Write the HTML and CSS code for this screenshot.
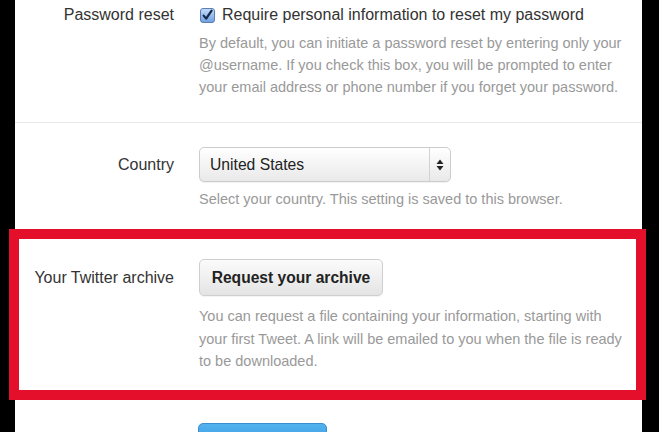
FILE: index.html
```html
<!DOCTYPE html>
<html lang="en">
<head>
<meta charset="utf-8">
<title>Settings</title>
<link rel="stylesheet" href="styles.css">
</head>
<body>
<div class="panel">
  <div class="row row-first">
    <div class="label">Password reset</div>
    <div class="control">
      <label class="check">
        <svg class="cb" width="15" height="15" viewBox="0 0 15 15">
          <defs>
            <linearGradient id="cbg" x1="0" y1="0" x2="0" y2="1">
              <stop offset="0" stop-color="#c6dcf7"/>
              <stop offset="1" stop-color="#6f9fe0"/>
            </linearGradient>
          </defs>
          <rect x="0.5" y="0.5" width="14" height="14" rx="2.5" fill="url(#cbg)" stroke="#5a7fb4"/>
          <path d="M3.6 7.6 L6.2 10.6 L11.6 2.6" fill="none" stroke="#15294d" stroke-width="2.2" stroke-linecap="round" stroke-linejoin="round"/>
        </svg>
        <span>Require personal information to reset my password</span>
      </label>
      <p class="help help-first">By default, you can initiate a password reset by entering only your @username. If you check this box, you will be prompted to enter your email address or phone number if you forget your password.</p>
    </div>
  </div>
  <div class="row row-country">
    <div class="label label-select">Country</div>
    <div class="control">
      <div class="select">
        <span class="select-value">United States</span>
        <span class="select-arrows">
          <svg width="8" height="12" viewBox="0 0 8 12"><path d="M4 0.5 L7.5 5 L0.5 5 Z M4 11.5 L7.5 7 L0.5 7 Z" fill="#222"/></svg>
        </span>
      </div>
      <p class="help">Select your country. This setting is saved to this browser.</p>
    </div>
  </div>
  <div class="row row-archive">
    <div class="frame"></div>
    <div class="label label-button">Your Twitter archive</div>
    <div class="control">
      <button class="btn" type="button">Request your archive</button>
      <p class="help help-archive">You can request a file containing your information, starting with your first Tweet. A link will be emailed to you when the file is ready to be downloaded.</p>
    </div>
  </div>
  <div class="row row-save">
    <div></div>
    <div class="control">
      <button class="btn-primary" type="button" aria-label="Save changes"></button>
    </div>
  </div>
</div>
</body>
</html>
```
FILE: styles.css
```css
html, body {
  margin: 0;
  padding: 0;
  background: #000;
  height: 432px;
  overflow: hidden;
}
.panel {
  margin-left: 15px;
  width: 627px;
  height: 432px;
  background: #fff;
  font-family: "Liberation Sans", Arial, Helvetica, sans-serif;
  color: #333;
  font-size: 16px;
}
.row {
  display: grid;
  grid-template-columns: 159px 1fr;
  column-gap: 25px;
}
.label {
  text-align: right;
  line-height: 22px;
  color: #333;
}
.control {
  min-width: 0;
}
.row-first {
  padding-top: 4px;
  padding-bottom: 24px;
  border-bottom: 1px solid #e8e8e8;
}
.check {
  display: flex;
  align-items: center;
  gap: 7px;
  line-height: 22px;
  margin-left: 1px;
}
.cb {
  flex: none;
}
.help {
  margin: 6px 0 0;
  font-size: 14.5px;
  line-height: 22px;
  color: #999;
  padding-right: 12px;
}
.row-country {
  padding-top: 24px;
  padding-bottom: 24px;
  border-bottom: 1px solid #e8e8e8;
}
.label-select {
  line-height: 35px;
}
.select {
  box-sizing: border-box;
  width: 252px;
  height: 35px;
  border: 1px solid #ccc;
  border-radius: 5px;
  background: linear-gradient(#ffffff, #e9e9e9);
  display: flex;
  align-items: stretch;
  box-shadow: 0 1px 1px rgba(0,0,0,0.06);
}
.select-value {
  flex: 1;
  padding-left: 10px;
  line-height: 33px;
  color: #222;
  font-size: 15.7px;
}
.select-arrows {
  width: 20px;
  border-left: 1px solid #d2d2d2;
  display: flex;
  align-items: center;
  justify-content: center;
}
.row-archive {
  position: relative;
  padding-top: 24px;
}
.frame {
  position: absolute;
  left: -6px;
  top: -6px;
  width: 637px;
  height: 171px;
  box-sizing: border-box;
  border: 10px solid #e4102b;
  pointer-events: none;
}
.label-button {
  line-height: 37px;
}
.btn {
  box-sizing: border-box;
  width: 184px;
  height: 37px;
  border: 1px solid #cfcfcf;
  border-radius: 5px;
  background: linear-gradient(#fbfbfb, #e4e4e4);
  font-family: "Liberation Sans", Arial, Helvetica, sans-serif;
  font-size: 15.6px;
  font-weight: bold;
  color: #222;
  padding: 0;
  box-shadow: 0 1px 1px rgba(0,0,0,0.05);
}
.help-archive {
  margin-top: 9px;
  line-height: 22.5px;
}
.row-save {
  padding-top: 50px;
}
.btn-primary {
  box-sizing: border-box;
  width: 129px;
  height: 37px;
  margin-left: -1px;
  border: 1px solid #3b8dd0;
  border-radius: 5px;
  background: linear-gradient(#52b2ee, #2b8ad8);
  padding: 0;
}
```
